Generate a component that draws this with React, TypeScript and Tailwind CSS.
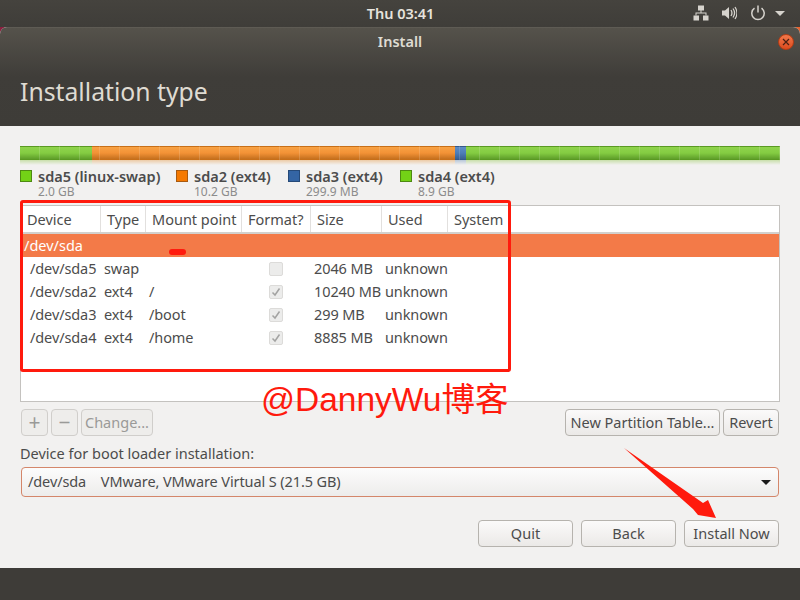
import React from 'react';

const segments = [
  { w: 'w-[72px]', c: 'from-[#8fd34c] via-[#84cc42] to-[#5f9e2a]', b: 'border-[#5a9a22]', r: 'from-[#c8dfaa]' },
  { w: 'w-[363px]', c: 'from-[#f8a244] via-[#f39236] to-[#c5701e]', b: 'border-[#c86f18]', r: 'from-[#eccba6]' },
  { w: 'w-[11px]', c: 'from-[#5d8cc4] via-[#4d7db8] to-[#3a6091]', b: 'border-[#35598a]', r: 'from-[#b6c6d8]' },
  { w: 'flex-1', c: 'from-[#8fd34c] via-[#84cc42] to-[#5f9e2a]', b: 'border-[#5a9a22]', r: 'from-[#c8dfaa]' },
];

const legend = [
  { name: 'sda5 (linux-swap)', size: '2.0 GB', box: 'bg-[#73d216] border-[#4e8a12]', w: 'w-[156px]' },
  { name: 'sda2 (ext4)', size: '10.2 GB', box: 'bg-[#f57900] border-[#a85a10]', w: 'w-[112px]' },
  { name: 'sda3 (ext4)', size: '299.9 MB', box: 'bg-[#3465a4] border-[#264a78]', w: 'w-[112px]' },
  { name: 'sda4 (ext4)', size: '8.9 GB', box: 'bg-[#73d216] border-[#4e8a12]', w: 'w-[112px]' },
];

const headers = ['Device', 'Type', 'Mount point', 'Format?', 'Size', 'Used', 'System'];

const rows = [
  { dev: '/dev/sda5', type: 'swap', mount: '', checked: false, size: '2046 MB' },
  { dev: '/dev/sda2', type: 'ext4', mount: '/', checked: true, size: '10240 MB' },
  { dev: '/dev/sda3', type: 'ext4', mount: '/boot', checked: true, size: '299 MB' },
  { dev: '/dev/sda4', type: 'ext4', mount: '/home', checked: true, size: '8885 MB' },
];

const cols = 'grid grid-cols-[80px_45px_96px_69px_71px_66px_1fr]';
const btn = 'h-[27px] rounded-[4px] border border-[#b6b3ae] bg-gradient-to-b from-[#fbfafa] to-[#ebe9e7] text-[#4c4c4c] flex items-center justify-center leading-none';
const btnOff = 'h-[27px] rounded-[4px] border border-[#d0cecb] bg-[#eeedeb] text-[#9a9a98] flex items-center justify-center leading-none';

const Check = ({ checked }: { checked: boolean }) => (
  <div className="w-[14px] h-[14px] rounded-[2px] border border-[#dcdbd9] bg-[#ececeb] flex items-center justify-center">
    {checked && (
      <svg width="10" height="10" viewBox="0 0 10 10" fill="none">
        <path d="M1.5 5.5 L4 8 L8.5 1.5" stroke="#a3a3a2" strokeWidth="1.5" />
      </svg>
    )}
  </div>
);

export default function App() {
  return (
    <div className="relative w-[800px] h-[600px] overflow-hidden flex flex-col bg-[#3e3c38] text-[14.5px] font-['Noto_Sans','Noto_Sans_CJK_SC',sans-serif]">
      {/* top panel */}
      <div className="h-[27px] shrink-0 bg-gradient-to-b from-[#45433e] to-[#3f3d39] flex items-center relative text-[#e6e3dd]">
        <div className="flex-1 text-center font-semibold text-[14.5px] pl-[1px]">Thu 03:41</div>
        <div className="absolute right-[15px] top-[5px] flex items-center">
          <svg width="16" height="16" viewBox="0 0 16 16" fill="#d6d3cd" className="mr-[12px]">
            <rect x="5" y="0.5" width="6" height="5" />
            <rect x="0.5" y="10.5" width="5.5" height="5" />
            <rect x="10" y="10.5" width="5.5" height="5" />
            <path d="M7.5 5h1v2.5H13.5v3h-1v-2h-9v2h-1v-3H7.5z" />
          </svg>
          <svg width="16" height="16" viewBox="0 0 16 16" fill="none" className="mr-[13px]">
            <path d="M1 5.5h3L8 2v12l-4-3.5H1z" fill="#d6d3cd" />
            <path d="M10 5c1 1.6 1 4.4 0 6M12 3.5c1.8 2.6 1.8 6.4 0 9M14 2c2.4 3.5 2.4 8.5 0 12" stroke="#d6d3cd" strokeWidth="1.3" />
          </svg>
          <svg width="16" height="16" viewBox="0 0 16 16" fill="none" className="mr-[9px]">
            <path d="M4.5 3.2a6.2 6.2 0 1 0 7 0" stroke="#d6d3cd" strokeWidth="1.5" />
            <path d="M8 0.5v7" stroke="#d6d3cd" strokeWidth="1.5" />
          </svg>
          <div className="w-0 h-0 border-x-[5px] border-x-transparent border-t-[5px] border-t-[#d6d3cd]" />
        </div>
      </div>

      {/* window */}
      <div className="flex-1 flex flex-col bg-gradient-to-r from-[#8a1f3f] to-[#e9622d]">
        <div className="flex-1 flex flex-col rounded-t-[7px] overflow-hidden bg-[#f2f1f0]">
          <div className="h-[99px] shrink-0 bg-gradient-to-b from-[#55524b] via-[#3f3d39] to-[#3e3c38] border-t border-[#5e5b54] relative">
            <div className="h-[28px] flex items-center justify-center font-semibold text-[14.5px] text-[#dfdbd2]">Install</div>
            <div className="absolute right-[6px] top-[6px] w-[16px] h-[16px] rounded-full bg-gradient-to-b from-[#f0784a] to-[#dc4a1c] border border-[#b53d15] flex items-center justify-center">
              <svg width="8" height="8" viewBox="0 0 8 8"><path d="M1 1 L7 7 M7 1 L1 7" stroke="#4a2012" strokeWidth="1.2" /></svg>
            </div>
            <div className="pl-[20px] pt-[18px] text-[24.75px] leading-[36px] text-[#dfdbd2]">Installation type</div>
          </div>

          <div className="flex-1 px-[20px] pt-[20px] text-[#4c4c4c]">
            {/* partition bar */}
            <div className="relative">
              <div className="flex h-[14px]">
                {segments.map((s, i) => (
                  <div key={i} className={`${s.w} h-full border-y bg-gradient-to-b ${s.c} ${s.b}`} />
                ))}
              </div>
              <div className="absolute left-0 right-0 top-0 h-[14px] bg-[repeating-linear-gradient(90deg,transparent_0,transparent_19px,rgba(255,255,255,0.15)_19px,rgba(255,255,255,0.15)_20px)]" />
              <div className="flex h-[5px]">
                {segments.map((s, i) => (
                  <div key={i} className={`${s.w} h-full bg-gradient-to-b ${s.r} to-transparent`} />
                ))}
              </div>
            </div>

            {/* legend */}
            <div className="flex mt-[3px] h-[30px]">
              {legend.map(l => (
                <div key={l.name} className={`${l.w} flex`}>
                  <div className={`w-[12px] h-[12px] mt-[2px] border ${l.box}`} />
                  <div className="ml-[6px]">
                    <div className="font-semibold text-[14.5px] leading-[16px] whitespace-nowrap">{l.name}</div>
                    <div className="text-[12px] leading-[14px] mt-[1px] text-[#8c8c8c] whitespace-nowrap">{l.size}</div>
                  </div>
                </div>
              ))}
            </div>

            {/* table */}
            <div className="mt-[7px] h-[197px] border border-[#c4c2bf] bg-white">
              <div className={`${cols} h-[28px] border-b-2 border-[#d2d0cd] items-center`}>
                {headers.map(h => (
                  <div key={h} className="pl-[6px] pt-[2px] h-full flex items-center border-r border-[#e2e0de] last:border-r-0 whitespace-nowrap">{h}</div>
                ))}
              </div>
              <div className="h-[23px] bg-[#f37a48] text-white pl-[3px] leading-[23px]">/dev/sda</div>
              {rows.map(r => (
                <div key={r.dev} className={`${cols} h-[23px] items-center whitespace-nowrap tracking-[-0.1px]`}>
                  <div className="pl-[9px]">{r.dev}</div>
                  <div className="pl-[3px]">{r.type}</div>
                  <div className="pl-[3px]">{r.mount}</div>
                  <div className="pl-[27px]"><Check checked={r.checked} /></div>
                  <div className="pl-[3px]">{r.size}</div>
                  <div className="pl-[3px]">unknown</div>
                  <div />
                </div>
              ))}
            </div>

            {/* partition buttons */}
            <div className="flex items-center mt-[7px]">
              <div className={`${btnOff} w-[27px] ml-[1px] text-[21px] text-[#8a8a88]`}>+</div>
              <div className={`${btnOff} w-[27px] ml-[3px] text-[21px] text-[#8a8a88]`}>−</div>
              <div className={`${btnOff} w-[72px] ml-[3px]`}>Change...</div>
              <div className={`${btn} w-[155px] ml-auto`}>New Partition Table...</div>
              <div className={`${btn} w-[56px] ml-[3px] mr-[1px]`}>Revert</div>
            </div>

            <div className="mt-[7px] h-[20px] leading-[20px]">Device for boot loader installation:</div>

            {/* combobox */}
            <div className="mt-[4px] mx-[1px] h-[30px] rounded-[4px] border border-[#d4866a] bg-gradient-to-b from-[#fcfcfc] to-[#edeceb] flex items-center pl-[6px] pr-[7px]">
              <span className="whitespace-pre tracking-[-0.1px]">/dev/sda    VMware, VMware Virtual S (21.5 GB)</span>
              <div className="ml-auto w-0 h-0 border-x-[5px] border-x-transparent border-t-[5px] border-t-[#1a1a1a]" />
            </div>

            {/* bottom buttons */}
            <div className="flex justify-end gap-[8px] mt-[23px] mr-[1px]">
              <div className={`${btn} w-[95px]`}>Quit</div>
              <div className={`${btn} w-[95px]`}>Back</div>
              <div className={`${btn} w-[95px]`}>Install Now</div>
            </div>
          </div>
        </div>
        <div className="h-[32px] shrink-0 bg-[#3e3c38]" />
      </div>

      {/* annotations drawn on top of the screenshot */}
      <div className="absolute left-[20px] top-[200px] w-[491px] h-[172px] border-[3px] border-[#ff1a0d] rounded-[3px]" />
      <div className="absolute left-[169px] top-[249px] w-[17px] h-[6px] rounded-full bg-[#ff1a0d]" />
      <div className="absolute left-[261px] top-[378px] text-[33.5px] leading-[44px] text-[#ff1a0d] whitespace-nowrap font-['Liberation_Sans','Noto_Sans_CJK_SC',sans-serif]">@DannyWu博客</div>
      <svg className="absolute left-[620px] top-[444px]" width="100" height="80" viewBox="0 0 100 80">
        <path d="M4 4 L83 59 L88 56 L96 74 L78 71 L73 65 Z" fill="#ff1a0d" />
      </svg>
    </div>
  );
}
